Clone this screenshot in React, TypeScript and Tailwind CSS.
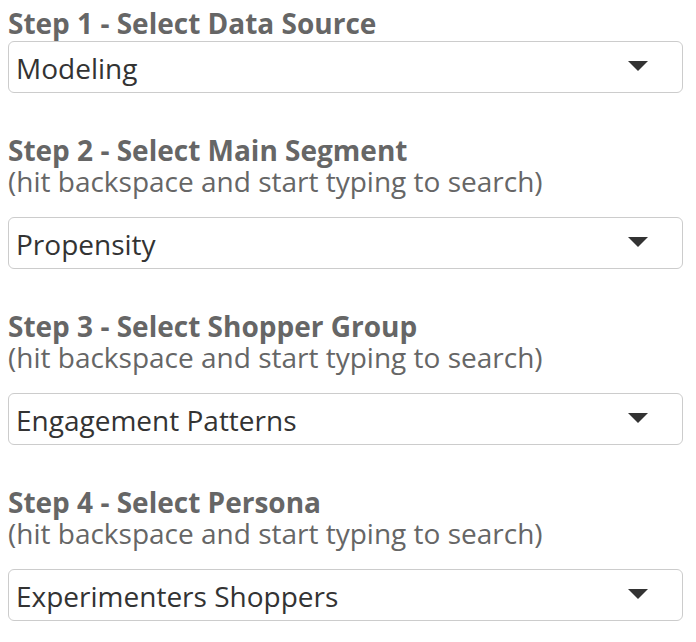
import React from 'react';

interface Step {
  title: string;
  value: string;
  searchable?: boolean;
}

const steps: Step[] = [
  { title: 'Step 1 - Select Data Source', value: 'Modeling' },
  { title: 'Step 2 - Select Main Segment', value: 'Propensity', searchable: true },
  { title: 'Step 3 - Select Shopper Group', value: 'Engagement Patterns', searchable: true },
  { title: 'Step 4 - Select Persona', value: 'Experimenters Shoppers', searchable: true },
];

const Caret = () => (
  <svg width="20" height="10" viewBox="0 0 20 10" className="shrink-0 -mt-[2px]">
    <polygon points="0,0 20,0 10,10" fill="#333333" />
  </svg>
);

const SelectBox: React.FC<{ value: string }> = ({ value }) => (
  <div className="w-[675px] h-[52px] border border-[#cccccc] rounded-md bg-white flex items-center justify-between pl-[7px] pr-[34px]">
    <span className="text-[28px] leading-[31px] text-[#333333] pt-[3px]">{value}</span>
    <Caret />
  </div>
);

const App: React.FC = () => {
  return (
    <div
      className="w-[696px] h-[642px] bg-white px-2 pt-[8px] flex flex-col gap-[42px]"
      style={{ fontFamily: '"Open Sans", "Liberation Sans", sans-serif' }}
    >
      {steps.map((step, i) => (
        <div key={step.title} className="flex flex-col">
          <label className={`text-[28px] leading-[31px] text-[#666666] ${step.searchable ? 'mb-[20px]' : 'mb-[2px]'}`}>
            <span className="font-bold">{step.title}</span>
            {step.searchable && (
              <>
                <br />
                (hit backspace and start typing to search)
              </>
            )}
          </label>
          <SelectBox value={step.value} />
        </div>
      ))}
    </div>
  );
};

export default App;
